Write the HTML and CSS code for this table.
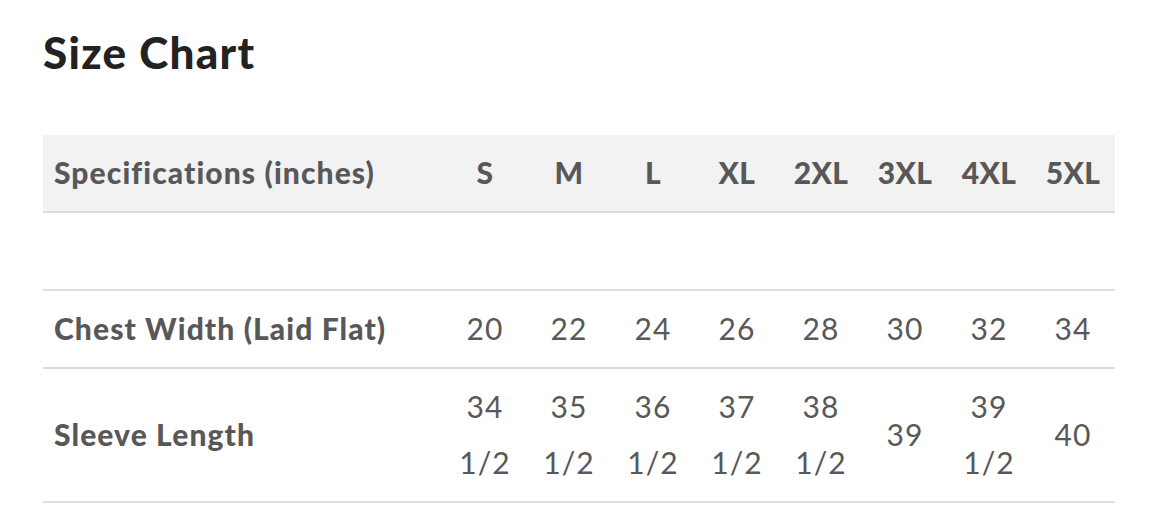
FILE: index.html
```html
<!DOCTYPE html>
<html lang="en">
<head>
<meta charset="utf-8">
<title>Size Chart</title>
<link rel="stylesheet" href="styles.css">
</head>
<body>
<main class="page">
  <h1 class="title">Size Chart</h1>
  <table class="chart">
    <colgroup>
      <col class="col-label">
      <col class="col-size"><col class="col-size"><col class="col-size"><col class="col-size">
      <col class="col-size"><col class="col-size"><col class="col-size"><col class="col-size">
    </colgroup>
    <thead>
      <tr>
        <th class="label">Specifications (inches)</th>
        <th>S</th><th>M</th><th>L</th><th>XL</th><th>2XL</th><th>3XL</th><th>4XL</th><th>5XL</th>
      </tr>
    </thead>
    <tbody>
      <tr class="blank">
        <td class="label"></td>
        <td></td><td></td><td></td><td></td><td></td><td></td><td></td><td></td>
      </tr>
      <tr>
        <td class="label">Chest Width (Laid Flat)</td>
        <td>20</td><td>22</td><td>24</td><td>26</td><td>28</td><td>30</td><td>32</td><td>34</td>
      </tr>
      <tr>
        <td class="label">Sleeve Length</td>
        <td>34 1/2</td><td>35 1/2</td><td>36 1/2</td><td>37 1/2</td><td>38 1/2</td><td>39</td><td>39 1/2</td><td>40</td>
      </tr>
    </tbody>
  </table>
</main>
</body>
</html>
```
FILE: styles.css
```css
html, body {
  margin: 0;
  padding: 0;
  background: #ffffff;
}

.page {
  padding: 25px 43px 0 43px;
  font-family: Lato, "Open Sans", "Liberation Sans", sans-serif;
}

.title {
  margin: 0 0 56px 0;
  font-size: 44px;
  line-height: 54px;
  font-weight: 900;
  letter-spacing: 1.3px;
  color: #222222;
}

.chart {
  width: 1072px;
  border-collapse: collapse;
  table-layout: fixed;
  color: #585858;
}

.col-label { width: 400px; }
.col-size { width: 84px; }

.chart th,
.chart td {
  padding: 9px 8px 11px;
  line-height: 56px;
  font-size: 30px;
  letter-spacing: 1px;
  text-align: center;
  vertical-align: middle;
  border-bottom: 2px solid #dddddd;
}

.chart thead th {
  background: #f2f2f2;
  font-weight: 900;
  letter-spacing: 0.4px;
}

.chart .label {
  padding-left: 11px;
  text-align: left;
  font-weight: 900;
  letter-spacing: 1.1px;
}

.chart td {
  font-weight: 400;
}

.blank td {
  height: 56px;
}
```
